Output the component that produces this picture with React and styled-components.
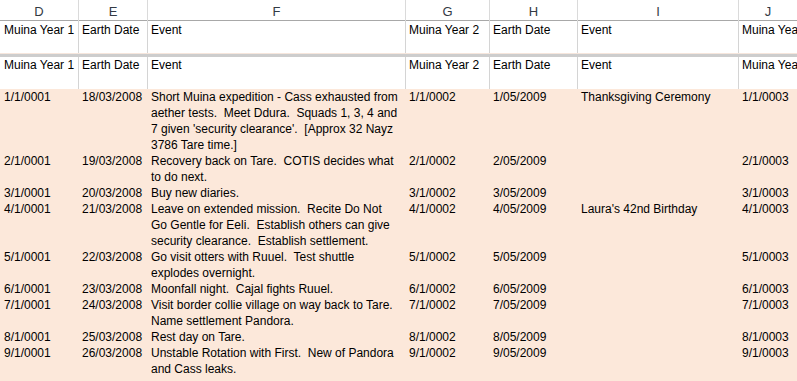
import React from "react";
import styled, { createGlobalStyle } from "styled-components";

const COLS = "79px 69px 258px 84px 88px 161px 1fr";

const GlobalStyle = createGlobalStyle`
  html, body {
    margin: 0;
    padding: 0;
    background: #ffffff;
    overflow: hidden;
  }
  * { box-sizing: border-box; }
  body {
    font-family: "Liberation Sans", Arial, sans-serif;
    color: #000;
  }
`;

const Sheet = styled.div`
  width: 797px;
  height: 381px;
  display: flex;
  flex-direction: column;
  overflow: hidden;
  background: #fff;
`;

const ColumnHeader = styled.div`
  display: grid;
  grid-template-columns: ${COLS};
  height: 21px;
  flex: none;
  border-bottom: 1px solid #a8a8a8;
`;

const ColLetter = styled.div`
  border-right: ${(p) => (p.$last ? "none" : "1px solid #dadada")};
  text-align: center;
  font-size: 13px;
  line-height: 20px;
  padding-top: 2px;
  color: #333a44;
`;

const HeaderRow = styled.div`
  display: grid;
  grid-template-columns: ${COLS};
  height: 32px;
  flex: none;
  background: #fff;
`;

const HeaderCell = styled.div`
  border-right: ${(p) => (p.$last ? "none" : "1px solid #d4d4d4")};
  padding: ${(p) => p.$pt}px 3px 0 ${(p) => (p.$first ? 4 : 3)}px;
  font-size: 12px;
  line-height: 16px;
  white-space: nowrap;
  overflow: hidden;
`;

const SplitBar = styled.div`
  height: 4px;
  flex: none;
  border-top: 1px solid #f6e6dc;
  background: #cdcdcd;
`;

const DataArea = styled.div`
  flex: 1;
  background: #fce8da;
`;

const DataRow = styled.div`
  display: grid;
  grid-template-columns: ${COLS};
`;

const DataCell = styled.div`
  padding: 0 3px 0 ${(p) => (p.$first ? 4 : 3)}px;
  font-size: 12px;
  line-height: 16px;
  white-space: pre;
  overflow: hidden;
`;

const letters = ["D", "E", "F", "G", "H", "I", "J"];
const headers = [
  "Muina Year 1",
  "Earth Date",
  "Event",
  "Muina Year 2",
  "Earth Date",
  "Event",
  "Muina Year 3",
];

const rows = [
  [
    "1/1/0001",
    "18/03/2008",
    "Short Muina expedition - Cass exhausted from\naether tests.  Meet Ddura.  Squads 1, 3, 4 and\n7 given 'security clearance'.  [Approx 32 Nayz\n3786 Tare time.]",
    "1/1/0002",
    "1/05/2009",
    "Thanksgiving Ceremony",
    "1/1/0003",
  ],
  [
    "2/1/0001",
    "19/03/2008",
    "Recovery back on Tare.  COTIS decides what\nto do next.",
    "2/1/0002",
    "2/05/2009",
    "",
    "2/1/0003",
  ],
  ["3/1/0001", "20/03/2008", "Buy new diaries.", "3/1/0002", "3/05/2009", "", "3/1/0003"],
  [
    "4/1/0001",
    "21/03/2008",
    "Leave on extended mission.  Recite Do Not\nGo Gentle for Eeli.  Establish others can give\nsecurity clearance.  Establish settlement.",
    "4/1/0002",
    "4/05/2009",
    "Laura's 42nd Birthday",
    "4/1/0003",
  ],
  [
    "5/1/0001",
    "22/03/2008",
    "Go visit otters with Ruuel.  Test shuttle\nexplodes overnight.",
    "5/1/0002",
    "5/05/2009",
    "",
    "5/1/0003",
  ],
  [
    "6/1/0001",
    "23/03/2008",
    "Moonfall night.  Cajal fights Ruuel.",
    "6/1/0002",
    "6/05/2009",
    "",
    "6/1/0003",
  ],
  [
    "7/1/0001",
    "24/03/2008",
    "Visit border collie village on way back to Tare.\nName settlement Pandora.",
    "7/1/0002",
    "7/05/2009",
    "",
    "7/1/0003",
  ],
  ["8/1/0001", "25/03/2008", "Rest day on Tare.", "8/1/0002", "8/05/2009", "", "8/1/0003"],
  [
    "9/1/0001",
    "26/03/2008",
    "Unstable Rotation with First.  New of Pandora\nand Cass leaks.",
    "9/1/0002",
    "9/05/2009",
    "",
    "9/1/0003",
  ],
];

function Header({ pt }) {
  return (
    <HeaderRow>
      {headers.map((h, i) => (
        <HeaderCell key={i} $pt={pt} $first={i === 0} $last={i === headers.length - 1}>
          {h}
        </HeaderCell>
      ))}
    </HeaderRow>
  );
}

export default function App() {
  return (
    <>
      <GlobalStyle />
      <Sheet>
        <ColumnHeader>
          {letters.map((l, i) => (
            <ColLetter key={l} $last={i === letters.length - 1}>
              {l}
            </ColLetter>
          ))}
        </ColumnHeader>
        <Header pt={1} />
        <SplitBar />
        <Header pt={0} />
        <DataArea>
          {rows.map((r, ri) => (
            <DataRow key={ri}>
              {r.map((c, ci) => (
                <DataCell key={ci} $first={ci === 0}>
                  {c}
                </DataCell>
              ))}
            </DataRow>
          ))}
        </DataArea>
      </Sheet>
    </>
  );
}
